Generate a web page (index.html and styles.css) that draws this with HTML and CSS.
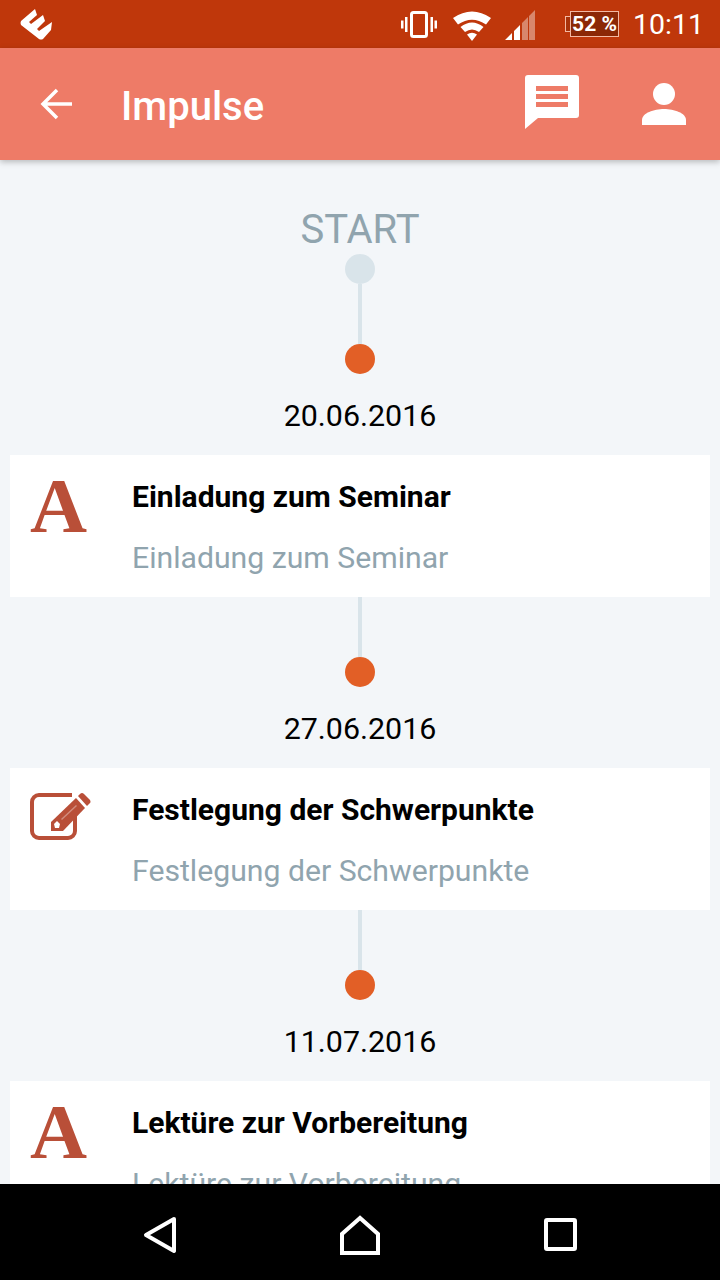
FILE: index.html
```html
<!DOCTYPE html>
<html lang="de">
<head>
    <meta charset="UTF-8">
    <meta name="viewport" content="width=device-width, initial-scale=1.0">
    <title>Impulse</title>
    <link rel="stylesheet" href="styles.css">
</head>
<body>
    <div class="status-bar">
        <svg class="status-logo" width="32" height="32" viewBox="0 0 32 32">
            <path fill="#fff" d="M15 1 L17 7 L9 14 L11 16 L23 7 L25 13 L17 21 L19 23 L32 14 L31 22 L23 31 Q21 32 19 31 L1 17 Q0 15 1 13 Z"/>
        </svg>
        <svg class="status-vibrate" width="36" height="27" viewBox="0 0 36 27">
            <rect x="10.5" y="1.5" width="15" height="24" rx="2" fill="none" stroke="#fff" stroke-width="3"/>
            <path fill="#fff" d="M4 6h2.500v15H4zM0 9.500h2.500v8H0zM29.500 6H32v15h-2.500zM33.500 9.500H36v8h-2.500z"/>
        </svg>
        <svg class="status-wifi" width="38" height="31" viewBox="0 0 38 31">
            <path fill="#fff" d="M0 8 Q19 -5 38 8 L33 14.500 Q19 5 5 14.500 Z"/>
            <path fill="#fff" d="M7.500 17 Q19 8 30.500 17 L26 22 Q19 17 12 22 Z"/>
            <path fill="#fff" d="M14 24.500 Q19 21 24 24.500 L19 31 Z"/>
        </svg>
        <svg class="status-signal" width="30" height="30" viewBox="0 0 30 30">
            <path fill="#fff" d="M0 30 L7 23 V30 Z M9 30 V21 L15 15 V30 Z"/>
            <path fill="#fff" opacity="0.4" d="M17 30 V13 L23 7 V30 Z M24 30 V6 L30 0 V30 Z"/>
        </svg>
        <div class="status-battery">
            <span class="battery-cap"></span>
            <span class="battery-body">52 %</span>
        </div>
        <span class="status-time">10:11</span>
    </div>

    <div class="app-bar">
        <svg class="back-icon" width="32" height="32" viewBox="0 0 32 32">
            <path fill="none" stroke="#fff" stroke-width="3.500" d="M32 16H3M17 2 3 16l14 14"/>
        </svg>
        <span class="app-title">Impulse</span>
        <svg class="chat-icon" width="54" height="54" viewBox="0 0 54 54">
            <path fill="#fff" fill-rule="evenodd" d="M3 0h48a3 3 0 0 1 3 3v37a3 3 0 0 1-3 3H13L0 54V3a3 3 0 0 1 3-3ZM11 11v5h32v-5ZM11 19v5h32v-5ZM11 27v5h32v-5Z"/>
        </svg>
        <svg class="person-icon" width="44" height="42" viewBox="0 0 44 42">
            <circle cx="22" cy="11" r="11" fill="#fff"/>
            <path fill="#fff" d="M0 42v-5c0-7 12-11 22-11s22 4 22 11v5Z"/>
        </svg>
    </div>

    <div class="timeline">
        <div class="start-label">START</div>
        <div class="dot dot-start"></div>
        <div class="line"></div>
        <div class="dot"></div>
        <div class="date">20.06.2016</div>
        <div class="card">
            <div class="card-icon font-icon">A</div>
            <div class="card-text">
                <div class="card-title">Einladung zum Seminar</div>
                <div class="card-sub">Einladung zum Seminar</div>
            </div>
        </div>
        <div class="line"></div>
        <div class="dot"></div>
        <div class="date">27.06.2016</div>
        <div class="card">
            <div class="card-icon">
                <svg width="62" height="48" viewBox="0 0 62 48">
                    <path fill="none" stroke="#b94f38" stroke-width="4" d="M42 2H9a7 7 0 0 0-7 7v29a7 7 0 0 0 7 7h29a7 7 0 0 0 7-7v-15"/>
                    <path fill="#b94f38" d="M21 29 L46 5 L55 15 L33 38 H21 Z"/>
                    <path fill="#b94f38" d="M48 3 L50 1 Q52 -1 54 1 L60 7 Q61 9 60 10 L57 13 Z"/>
                    <path fill="#fff" d="M24 31 L27 28 L30 31 L29 35 H25 Z"/>
                    <path fill="#fff" opacity="0.35" d="M31 26 L46 12 L47 13 L32 27 Z"/>
                </svg>
            </div>
            <div class="card-text">
                <div class="card-title">Festlegung der Schwerpunkte</div>
                <div class="card-sub">Festlegung der Schwerpunkte</div>
            </div>
        </div>
        <div class="line"></div>
        <div class="dot"></div>
        <div class="date">11.07.2016</div>
        <div class="card">
            <div class="card-icon font-icon">A</div>
            <div class="card-text">
                <div class="card-title">Lektüre zur Vorbereitung</div>
                <div class="card-sub">Lektüre zur Vorbereitung</div>
            </div>
        </div>
    </div>

    <div class="nav-bar">
        <svg width="34" height="38" viewBox="0 0 34 38">
            <path fill="none" stroke="#fff" stroke-width="4" stroke-linejoin="round" d="M32 3 4 19l28 16Z"/>
        </svg>
        <svg width="40" height="40" viewBox="0 0 40 40">
            <path fill="none" stroke="#fff" stroke-width="4" d="M20 3 2 19v19h36V19Z"/>
        </svg>
        <svg width="34" height="34" viewBox="0 0 34 34">
            <rect x="2" y="2" width="29" height="29" rx="1" fill="none" stroke="#fff" stroke-width="4"/>
        </svg>
    </div>
</body>
</html>
```

FILE: styles.css
```css
body {
    font-family: Roboto, sans-serif;
    margin: 0;
    height: 1280px;
    width: 720px;
    display: flex;
    flex-direction: column;
    overflow: hidden;
    background: #f3f6f9;
}
.status-bar {
    height: 48px;
    flex: none;
    display: flex;
    align-items: center;
    background: #bf370b;
    color: #fff;
    padding: 0 16px 0 20px;
    box-sizing: border-box;
}
.status-logo {
    margin-right: auto;
}
.status-vibrate {
    margin-right: 16px;
}
.status-wifi {
    margin-right: 14px;
    margin-top: 2px;
}
.status-signal {
    margin-right: 30px;
    margin-top: 2px;
}
.status-battery {
    display: flex;
    align-items: center;
    margin-right: 14px;
}
.battery-cap {
    width: 4px;
    height: 14px;
    border: 1px solid #f3b9a3;
    border-right: none;
    background: #a8320a;
}
.battery-body {
    width: 47px;
    height: 24px;
    border: 1px solid #f3b9a3;
    background: #8c2806;
    font-size: 21px;
    font-weight: 700;
    line-height: 24px;
    text-align: center;
}
.status-time {
    font-size: 28.5px;
}
.app-bar {
    height: 112px;
    flex: none;
    display: flex;
    align-items: center;
    background: #ee7b67;
    padding: 0 34px 0 40px;
    box-sizing: border-box;
    box-shadow: 0 2px 6px rgba(0, 0, 0, 0.25);
    position: relative;
    z-index: 1;
}
.app-title {
    color: #fff;
    font-size: 40px;
    font-weight: 500;
    margin-left: 49px;
    margin-right: auto;
    padding-top: 4px;
}
.person-icon {
    margin-left: 63px;
    margin-top: -1px;
}
.chat-icon {
    margin-top: -4px;
}
.timeline {
    flex: 1;
    min-height: 0;
    overflow: hidden;
    display: flex;
    flex-direction: column;
    align-items: center;
    padding-top: 45px;
}
.start-label {
    color: #90a4ae;
    font-size: 40px;
    line-height: 49px;
}
.dot {
    width: 30px;
    height: 30px;
    border-radius: 50%;
    background: #e25f26;
    flex: none;
}
.dot-start {
    background: #d9e4ea;
}
.line {
    width: 4px;
    height: 60px;
    flex: none;
    background: #d9e4ea;
}
.date {
    color: #000;
    font-size: 30.4px;
    line-height: 36px;
    margin: 24px 0 21px;
}
.card {
    width: 700px;
    height: 142px;
    flex: none;
    background: #fff;
    display: flex;
    padding: 25px 20px 0;
    box-sizing: border-box;
}
.card-icon {
    width: 102px;
    flex: none;
}
.font-icon {
    color: #b94f38;
    font-family: "Liberation Serif", serif;
    font-size: 79px;
    font-weight: bold;
    line-height: 52px;
}
.card-title {
    color: #000;
    font-size: 30px;
    font-weight: 700;
    line-height: 34px;
}
.card-sub {
    color: #90a4ae;
    font-size: 30.2px;
    line-height: 36px;
    margin-top: 26px;
}
.nav-bar {
    height: 96px;
    flex: none;
    background: #000;
    display: flex;
    align-items: center;
    justify-content: space-between;
    padding: 5px 142px 0;
    box-sizing: border-box;
}
```
